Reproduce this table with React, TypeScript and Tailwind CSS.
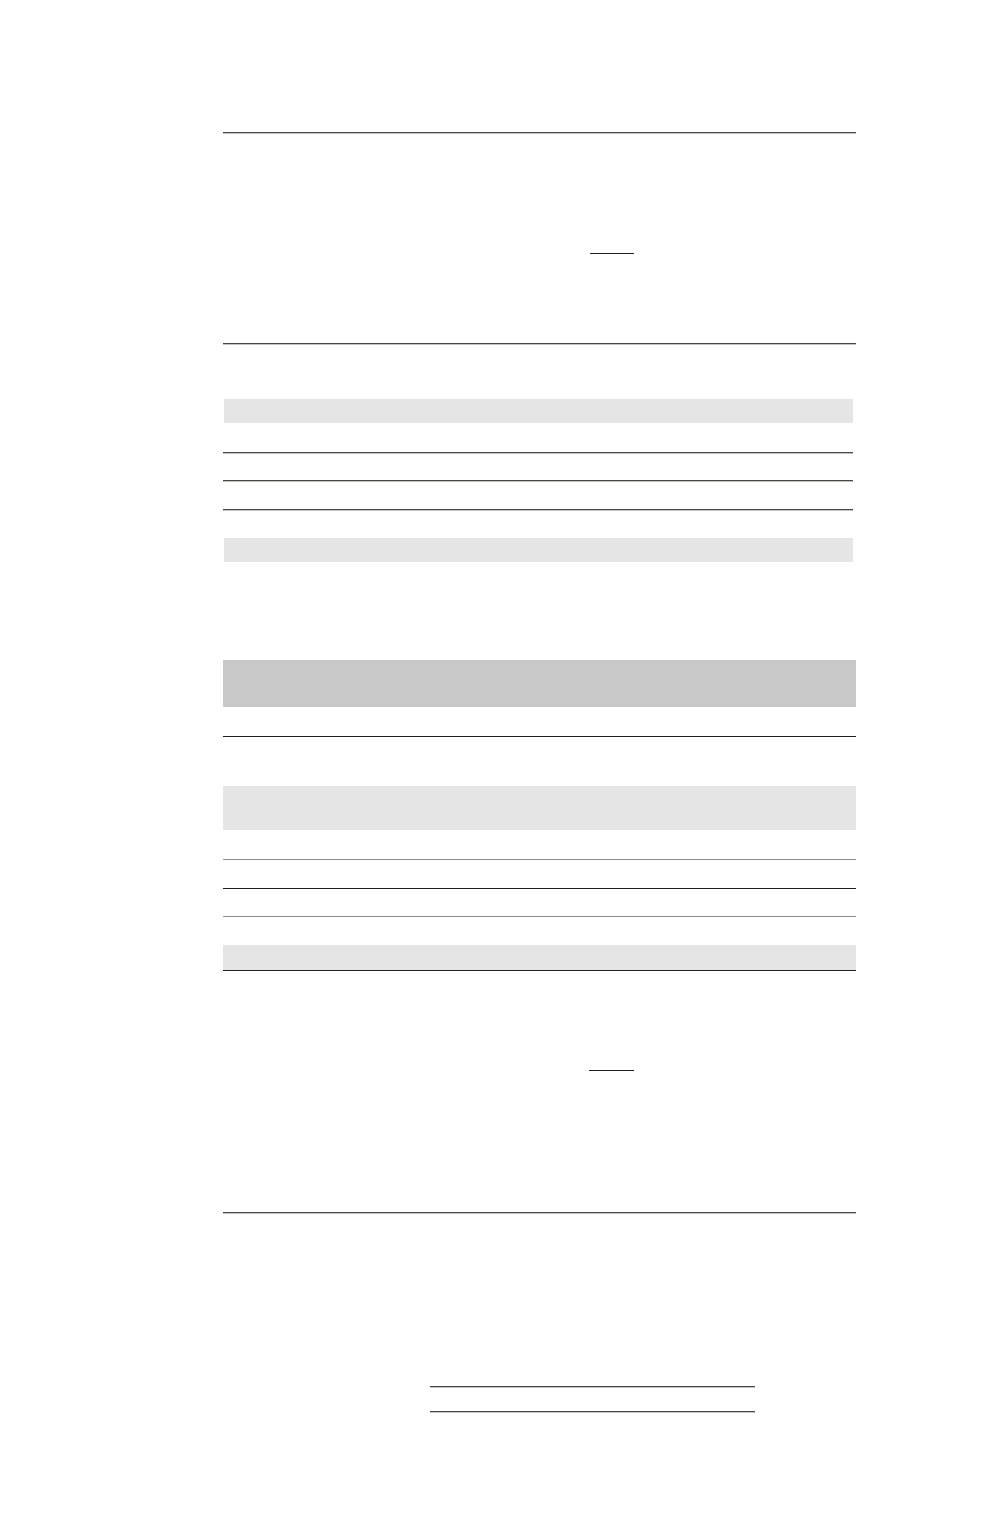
// ruled lines in the scan carry a faint light edge under the dark stroke
const rule = 'h-[2px] border-t border-[#4b4843] bg-[#c4c2bf]'
const ruleDark = 'h-px bg-[#231f1a]'
const ruleGray = 'h-px bg-[#8c8c8c]'

export default function App(): React.ReactNode {
  return (
    <div className="min-h-[1528px] w-full bg-white">
      <div className="ml-[223px] w-[633px] pt-[132px]">
        {/* header block */}
        <div className={rule} />
        <div className={`mt-[119px] ml-[367px] w-[44px] ${ruleDark}`} />
        <div className={`mt-[89px] ${rule}`} />

        {/* summary rows */}
        <div className="mt-[54px] ml-px h-[24px] w-[629px] bg-[#e5e5e5]" />
        <div className={`mt-[29px] w-[630px] ${rule}`} />
        <div className={`mt-[26px] w-[630px] ${rule}`} />
        <div className={`mt-[27px] w-[630px] ${rule}`} />
        <div className="mt-[27px] ml-px h-[24px] w-[629px] bg-[#e5e5e5]" />

        {/* table */}
        <div className="mt-[98px] h-[47px] bg-[#c8c8c8]" />
        <div className={`mt-[29px] ${ruleDark}`} />
        <div className="mt-[49px] h-[44px] bg-[#e5e5e5]" />
        <div className={`mt-[29px] ${ruleGray}`} />
        <div className={`mt-[28px] ${ruleDark}`} />
        <div className={`mt-[27px] ${ruleGray}`} />
        <div className="mt-[28px] h-[26px] border-b border-[#231f1a] bg-[#e5e5e5]" />

        {/* footer block */}
        <div className={`mt-[99px] ml-[366px] w-[45px] ${ruleDark}`} />
        <div className={`mt-[141px] ${rule}`} />

        {/* signatures */}
        <div className={`mt-[172px] ml-[207px] w-[325px] ${rule}`} />
        <div className={`mt-[23px] ml-[207px] w-[325px] ${rule}`} />
      </div>
    </div>
  )
}
